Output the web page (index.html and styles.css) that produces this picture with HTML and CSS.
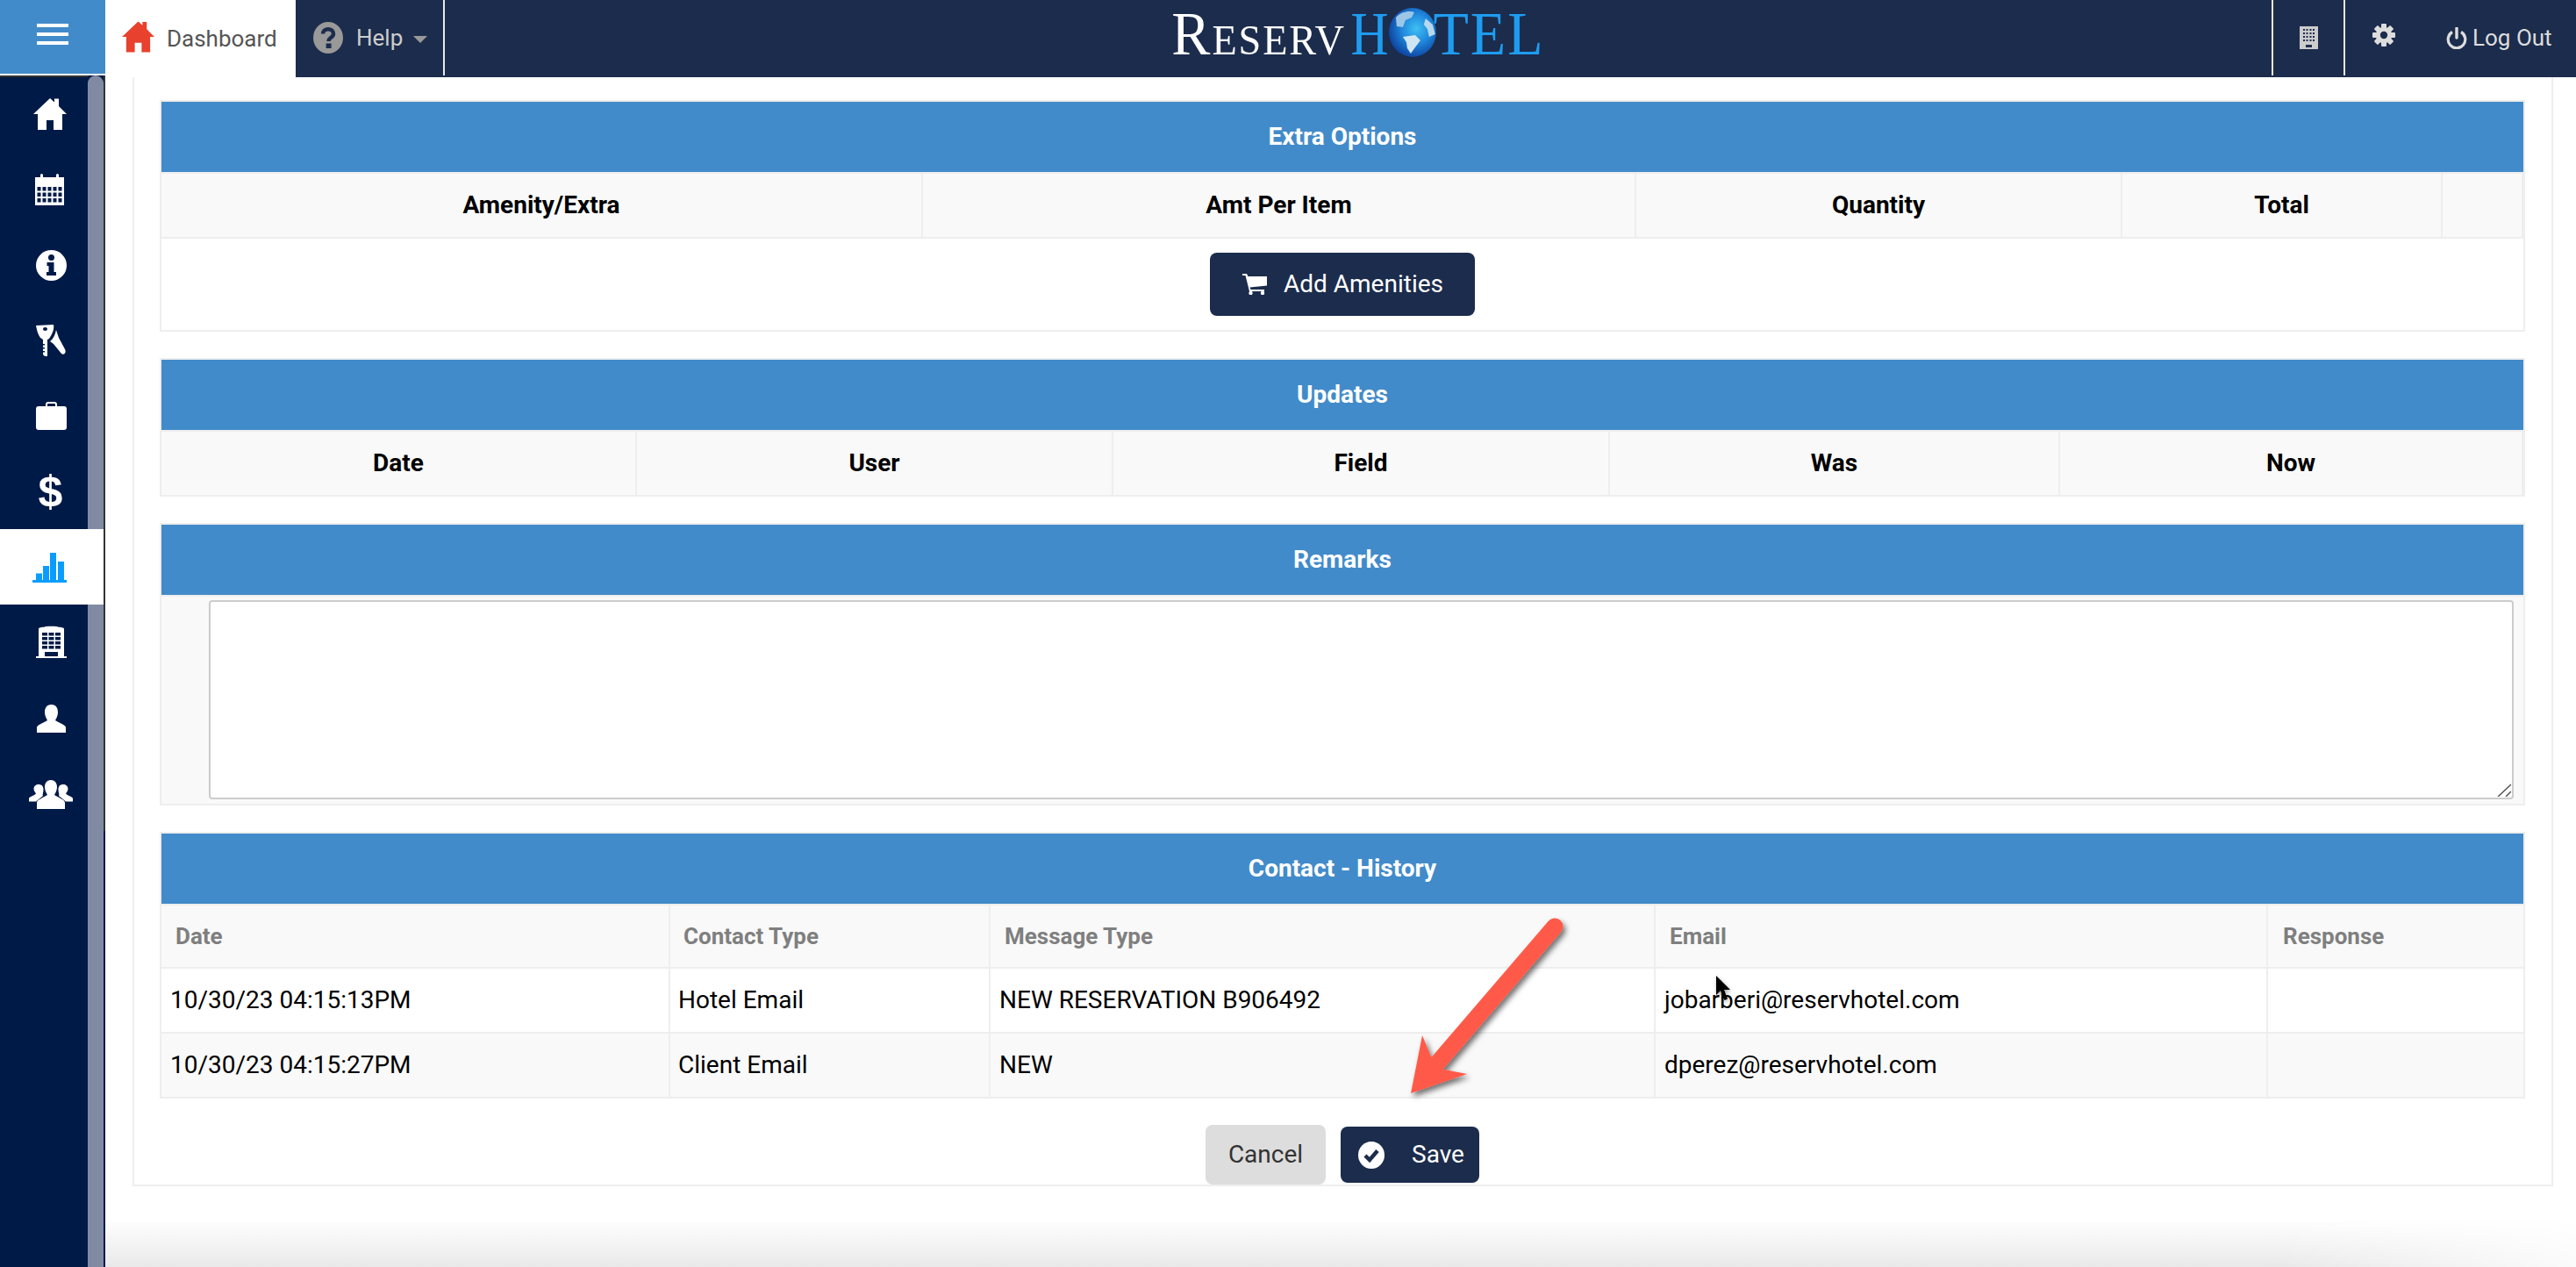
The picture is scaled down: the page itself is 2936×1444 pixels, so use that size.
FILE: index.html
```html
<!DOCTYPE html>
<html lang="en">
<head>
<meta charset="utf-8">
<title>ReservHotel</title>
<link rel="stylesheet" href="styles.css">
</head>
<body>
<div class="app">
  <header class="topbar">
    <div class="burger"><span></span><span></span><span></span></div>
    <a class="tab tab-active">
      <svg class="tab-home" viewBox="0 0 38 36"><path d="M19 0L24 4.5V.5H29V9L38 18H33V36H23V25H15V36H5V18H0Z"/></svg>
      Dashboard
    </a>
    <a class="tab tab-help">
      <svg class="help-ico" viewBox="0 0 34 36"><ellipse cx="17" cy="18" rx="17" ry="18" fill="#999"/><path d="M11 13.5C11 6.5 23 6.5 23 13.5C23 18 17.5 17.5 17.5 22" fill="none" stroke="#1c2c4c" stroke-width="4.5"/><rect x="14.6" y="24.5" width="6" height="5.5" fill="#1c2c4c"/></svg>
      Help
      <i class="caret"></i>
    </a>
    <i class="sep"></i>
    <div class="logo-wrap">
      <div class="logo">
        <span class="logo-w">Reserv</span><span class="logo-b logo-h">H</span><svg class="globe" viewBox="0 0 54 56" preserveAspectRatio="none">
          <defs><radialGradient id="gl" cx="58%" cy="42%" r="62%"><stop offset="0" stop-color="#3fc0f2"/><stop offset=".5" stop-color="#1f86dc"/><stop offset="1" stop-color="#0d3f9a"/></radialGradient></defs>
          <ellipse cx="27" cy="28" rx="27" ry="28" fill="url(#gl)"/>
          <path d="M8 11C14 4 24 3 29 5L26 11L19 14L16 22L9 21Z" fill="#9cc6e6"/>
          <path d="M16 33L30 31L36 37L30 45L25 52L21 46L20 39Z" fill="#cfe6f2"/>
          <path d="M42 12L50 19L53 30L46 33L44 24L40 19Z" fill="#b6d8ee"/>
        </svg><span class="logo-b logo-tel">TEL</span>
      </div>
    </div>
    <i class="sep"></i>
    <a class="tool tool-bld">
      <svg class="bld-small" viewBox="0 0 21 26"><path fill-rule="evenodd" d="M0 0H21V26H0ZM4 3V5H6V3ZM7.500 3V5H9.500V3ZM11.500 3V5H13.500V3ZM15 3V5H17V3ZM4 7V9H6V7ZM7.500 7V9H9.500V7ZM11.500 7V9H13.500V7ZM15 7V9H17V7ZM4 11V13H6V11ZM7.500 11V13H9.500V11ZM11.500 11V13H13.500V11ZM15 11V13H17V11ZM4 15V17H6V15ZM7.500 15V17H9.500V15ZM11.500 15V17H13.500V15ZM15 15V17H17V15ZM7 21V24H14V21Z"/></svg>
    </a>
    <i class="sep"></i>
    <a class="tool tool-gear">
      <svg class="gear" viewBox="0 0 26 26"><g fill="#ddd"><rect x="10" y="0" width="6" height="26" rx="1"/><rect x="10" y="0" width="6" height="26" rx="1" transform="rotate(45 13 13)"/><rect x="10" y="0" width="6" height="26" rx="1" transform="rotate(90 13 13)"/><rect x="10" y="0" width="6" height="26" rx="1" transform="rotate(135 13 13)"/></g><circle cx="13" cy="13" r="7" fill="none" stroke="#ddd" stroke-width="4.5"/><circle cx="13" cy="13" r="4.2" fill="#1c2c4c"/></svg>
    </a>
    <a class="logout">
      <svg class="power" viewBox="0 0 24 25"><path d="M7 5.5A9.8 9.8 0 1 0 17 5.5" fill="none" stroke="#ddd" stroke-width="3.2"/><path d="M12 1V12" stroke="#ddd" stroke-width="3.4" stroke-linecap="round"/></svg>
      Log Out
    </a>
  </header>

  <div class="body-row">
    <aside class="sidebar">
      <i class="thumb"></i>
      <nav class="side-nav">
        <a class="side-item"><svg class="ico-home" viewBox="0 0 38 36"><path d="M19 0L24 4.5V.5H29V9L38 18H33V36H23V25H15V36H5V18H0Z"/></svg></a>
        <a class="side-item"><svg class="ico-cal" viewBox="0 0 33 36"><path d="M0 4H6V1.5A1.5 1.5 0 0 1 9 1.5V4H24V1.5A1.5 1.5 0 0 1 27 1.5V4H33V36H0Z"/><g fill="#001a47"><rect x="2.500" y="15" width="4" height="4.500"/><rect x="8.500" y="15" width="4" height="4.500"/><rect x="14.500" y="15" width="4" height="4.500"/><rect x="20.500" y="15" width="4" height="4.500"/><rect x="26.500" y="15" width="4" height="4.500"/><rect x="2.500" y="21.500" width="4" height="4.500"/><rect x="8.500" y="21.500" width="4" height="4.500"/><rect x="14.500" y="21.500" width="4" height="4.500"/><rect x="20.500" y="21.500" width="4" height="4.500"/><rect x="26.500" y="21.500" width="4" height="4.500"/><rect x="2.500" y="28" width="4" height="4.500"/><rect x="8.500" y="28" width="4" height="4.500"/><rect x="14.500" y="28" width="4" height="4.500"/><rect x="20.500" y="28" width="4" height="4.500"/><rect x="26.500" y="28" width="4" height="4.500"/></g></svg></a>
        <a class="side-item"><svg class="ico-info" viewBox="0 0 35 35"><circle cx="17.500" cy="17.500" r="17.500"/><g fill="#001a47"><circle cx="17.500" cy="8.500" r="3.500"/><path d="M12.500 14H20.500V25H23V29H12V25H14.500V18H12.500Z"/></g></svg></a>
        <a class="side-item"><svg class="ico-keys" viewBox="0 0 34 36"><path fill-rule="evenodd" d="M0 1L20 0C21 5 19 10 15 16L13 17V36H10L8 34V17L5 15C2 11 1 6 0 1ZM8 5A2.500 2 0 0 0 13 5A2.500 2 0 0 0 8 5Z"/><path d="M23 6L26 15L33 28C35 32 32 35 29 33L20 22L16 19C20 16 22 11 23 6Z"/><path d="M10 22H8V23.500H10ZM10 26H8V27.500H10ZM10 30H8V31.500H10Z" fill="#001a47"/></svg></a>
        <a class="side-item"><svg class="ico-case" viewBox="0 0 35 32"><path d="M3 5H11V3C11 1 12 0 14 0H21C23 0 24 1 24 3V5H32C34 5 35 6 35 8V29C35 31 34 32 32 32H3C1 32 0 31 0 29V8C0 6 1 5 3 5ZM13 5H22V3C22 2.500 21.500 2 21 2H14C13.500 2 13 2.500 13 3Z"/></svg></a>
        <a class="side-item side-dollar">$</a>
        <a class="side-item side-active"><svg class="ico-chart" viewBox="0 0 39 34"><path d="M0 31H39V34H0ZM4 23.500H11V31H4ZM12 15H19V31H12ZM20 0H27V31H20ZM29 10H36V31H29Z"/></svg></a>
        <a class="side-item"><svg class="ico-bld" viewBox="0 0 35 37"><path fill-rule="evenodd" d="M3 4C3 2 6 2 10 1.500C10 .5 25 .5 25 1.500C29 2 32 2 32 4V35H35V37H0V35H3ZM7 8V11.500H13V8ZM14.500 8V11.500H20.500V8ZM22 8V11.500H28V8ZM7 13V16.500H13V13ZM14.500 13V16.500H20.500V13ZM22 13V16.500H28V13ZM7 18V21.500H13V18ZM14.500 18V21.500H20.500V18ZM22 18V21.500H28V18ZM7 23V26.500H13V23ZM14.500 23V26.500H20.500V23ZM22 23V26.500H28V23ZM10 30V35H25V30Z"/></svg></a>
        <a class="side-item"><svg class="ico-user" viewBox="0 0 33 32"><path d="M16.500 0C22 0 24 4 24 9C24 13 22 16 21 18C25 21 33 23 33 26V32H0V26C0 23 8 21 12 18C11 16 9 13 9 9C9 4 11 0 16.500 0Z"/></svg></a>
        <a class="side-item"><svg class="ico-group" viewBox="0 0 50 33"><path d="M25 0C30 0 32 4 32 8C32 12 30 15 29 17C33 20 41 22 41 26V33H9V26C9 22 17 20 21 17C20 15 18 12 18 8C18 4 20 0 25 0Z"/><path d="M11 5C14.500 5 16.500 7 16.500 11C16.500 14 15 17 16 18L8 24.500H0V21C0 19 6 18 8 15.500C7 14 5.500 12 5.500 10C5.500 7 8 5 11 5Z"/><path d="M39 5C35.500 5 33.500 7 33.500 11C33.500 14 35 17 34 18L42 24.500H50V21C50 19 44 18 42 15.500C43 14 44.500 12 44.500 10C44.500 7 42 5 39 5Z"/></svg></a>
      </nav>
    </aside>

    <main class="main">
      <div class="panel">
        <table class="sec">
          <colgroup><col class="w868"><col class="w813"><col class="w554"><col class="w365"><col></colgroup>
          <tr><th colspan="5" class="sec-title">Extra Options</th></tr>
          <tr class="head"><th>Amenity/Extra</th><th>Amt Per Item</th><th>Quantity</th><th>Total</th><th class="last"></th></tr>
          <tr><td colspan="5" class="add-cell"><button class="btn btn-add"><svg class="cart" viewBox="0 0 28 24"><path d="M0 0H5L6.500 3H28V13.500L8.500 15.500L9.500 18H25V20H8L3.500 2H0Z"/><circle cx="9.500" cy="22" r="2.200"/><circle cx="23" cy="22" r="2.200"/></svg>Add Amenities</button></td></tr>
        </table>

        <table class="sec">
          <colgroup><col class="w542"><col class="w543"><col class="w566"><col class="w513"><col></colgroup>
          <tr><th colspan="5" class="sec-title">Updates</th></tr>
          <tr class="head"><th>Date</th><th>User</th><th>Field</th><th>Was</th><th class="last">Now</th></tr>
        </table>

        <table class="sec">
          <tr><th class="sec-title">Remarks</th></tr>
          <tr><td class="remarks-cell"><div class="remarks-wrap"><textarea class="remarks"></textarea><svg class="grip" viewBox="0 0 16 16"><path d="M1 16L16 2M10 16L16 10" stroke="#555" stroke-width="1.5" fill="none"/></svg></div></td></tr>
        </table>

        <table class="sec sec-hist">
          <colgroup><col class="w580"><col class="w365"><col class="w758"><col class="w698"><col></colgroup>
          <tr><th colspan="5" class="sec-title">Contact - History</th></tr>
          <tr class="head-left"><th>Date</th><th>Contact Type</th><th>Message Type</th><th>Email</th><th class="last">Response</th></tr>
          <tr class="row"><td>10/30/23 04:15:13PM</td><td>Hotel Email</td><td>NEW RESERVATION B906492</td><td>jobarberi@reservhotel.com</td><td class="last"></td></tr>
          <tr class="row row-alt"><td>10/30/23 04:15:27PM</td><td>Client Email</td><td>NEW</td><td>dperez@reservhotel.com</td><td class="last"></td></tr>
        </table>

        <div class="actions">
          <button class="btn btn-cancel">Cancel</button>
          <button class="btn btn-save"><svg class="check" viewBox="0 0 30 31"><ellipse cx="15" cy="15.500" rx="15" ry="15.500" fill="#fff"/><path d="M8 16L13 21L22 10.500" fill="none" stroke="#1c2c4c" stroke-width="4.500"/></svg>Save</button>
        </div>
      </div>
      <div class="page-foot"></div>
    </main>
  </div>

  <svg class="annot" viewBox="0 0 2936 1444">
    <defs><filter id="sh" x="-20%" y="-20%" width="140%" height="140%"><feDropShadow dx="3" dy="4" stdDeviation="3" flood-color="#000" flood-opacity=".55"/></filter></defs>
    <g filter="url(#sh)" fill="#ff5a4a">
      <path d="M1772 1056L1638 1212" stroke="#ff5a4a" stroke-width="19" stroke-linecap="round"/>
      <path d="M1608 1246L1621 1180L1631 1204L1646 1219L1672 1224Z"/>
    </g>
  </svg>
  <svg class="cursor" viewBox="0 0 20 30"><path d="M1 0V22L6 17L10.500 28L14 26.500L10 16H17Z" fill="#000"/></svg>
</div>
</body>
</html>
```
FILE: styles.css
```css
* { box-sizing: border-box; }
html, body { margin: 0; padding: 0; height: 100%; background: #fff; }
body { font-family: Roboto, "Liberation Sans", sans-serif; font-size: 28px; color: #000; overflow: hidden; }
a { display: flex; }
.app { position: relative; display: flex; flex-direction: column; height: 1444px; overflow: hidden; }

/* top bar */
.topbar { display: flex; height: 88px; background: #1c2c4c; flex: none; }
.burger { width: 120px; height: 86px; background: #428bca; border-bottom: 2px solid #fff; display: flex; flex-direction: column; align-items: center; padding: 27px 0 0; gap: 6px; flex: none; }
.burger span { width: 36px; height: 4px; background: #fff; display: block; }
.tab { align-items: center; height: 86px; font-size: 26px; }
.tab-active { width: 217px; height: 88px; background: #fff; color: #555; padding: 0 0 0 19px; gap: 14px; }
.tab-home { width: 37px; height: 36px; fill: #e8412d; margin-top: -4px; }
.tab-help { width: 168px; color: #ccc; padding-left: 20px; }
.help-ico { width: 34px; height: 36px; margin-right: 15px; }
.caret { width: 0; height: 0; border: 8px solid transparent; border-top: 8px solid #999; border-bottom: 0; margin-left: 12px; margin-top: 4px; }
.sep { display: block; width: 2px; height: 86px; background: #e8e8e8; flex: none; }
.logo-wrap { flex: 1; display: flex; justify-content: center; align-items: flex-start; }
.logo { display: flex; align-items: flex-start; height: 88px; font-family: "Liberation Serif", serif; font-size: 70px; line-height: 78px; filter: blur(.6px); transform: scaleX(.945); }
.logo-w { color: #fff; font-variant: small-caps; letter-spacing: 2px; margin-right: 6px; }
.logo-b { color: #1e9cf0; }
.logo-h { display: inline-block; transform: scaleX(.9); transform-origin: left center; margin-right: -5px; }
.logo-tel { letter-spacing: 2px; margin-left: -3px; }
.globe { width: 57px; height: 56px; margin-top: 9px; flex: none; }
.tool { width: 80px; height: 86px; justify-content: center; align-items: center; }
.bld-small { width: 21px; height: 26px; fill: #ccc; }
.tool-gear { width: 88px; padding-bottom: 6px; }
.gear { width: 26px; height: 26px; }
.logout { align-items: center; height: 86px; width: 175px; padding-left: 27px; color: #ddd; font-size: 26px; gap: 6px; }
.power { width: 24px; height: 25px; }

/* sidebar */
.body-row { flex: 1; display: flex; min-height: 0; }
.sidebar { position: relative; width: 120px; flex: none; margin-top: -2px; background: #001a47; }
.thumb { position: absolute; top: 0; bottom: 0; left: 100px; width: 18px; background: #808ba3; border-radius: 9px 9px 0 0; }
.side-nav { position: relative; border-right: 2px solid #333; padding-top: 1px; }
.side-nav::before { content: ""; position: absolute; left: 0; top: 0; width: 100px; height: 2px; background: #333; }
.side-item { height: 86px; width: 100px; align-items: center; justify-content: center; padding-left: 16px; fill: #fff; color: #fff; }
.side-active { width: 118px; background: #fff; position: relative; padding-left: 0; padding-right: 5px; }
.side-dollar { font-family: "Liberation Sans", sans-serif; font-weight: 700; font-size: 50px; padding-left: 15px; }
.ico-home { width: 38px; height: 36px; margin-left: -2px; }
.ico-cal { width: 33px; height: 36px; margin-left: -4px; }
.ico-info { width: 35px; height: 35px; }
.ico-keys { width: 34px; height: 36px; }
.ico-case { width: 35px; height: 32px; }
.ico-chart { width: 39px; height: 34px; fill: #0a9cff; margin-top: 1px; }
.ico-bld { width: 35px; height: 37px; margin-top: -2px; }
.ico-user { width: 33px; height: 32px; margin-top: 2px; }
.ico-group { width: 50px; height: 33px; margin-top: 2px; }

/* main */
.main { flex: 1; min-width: 0; display: flex; flex-direction: column; padding-left: 31px; }
.panel { width: 2759px; border: 2px solid #eee; border-top: 0; padding: 26px 30px 0 29px; flex: none; }
.sec { width: 2696px; table-layout: fixed; border-collapse: separate; border-spacing: 0; border: 2px solid #eee; border-bottom: 0; margin-bottom: 30px; }
.sec th, .sec td { padding: 0; border-bottom: 2px solid #eee; }
.sec .sec-title { height: 82px; padding-bottom: 2px; background: #428bca; color: #fff; font-weight: 700; font-size: 28px; text-align: center; }
.sec .head th { height: 74px; padding-bottom: 2px; background: #f9f9f9; border-right: 2px solid #eee; font-size: 28px; font-weight: 700; text-align: center; }
.sec .last { border-right: 0; }
.w868 { width: 868px; } .w813 { width: 813px; } .w554 { width: 554px; } .w365 { width: 365px; }
.w542 { width: 542px; } .w543 { width: 543px; } .w566 { width: 566px; } .w513 { width: 513px; }
.w580 { width: 580px; } .w758 { width: 758px; } .w698 { width: 698px; }
.add-cell { height: 106px; text-align: center; }
.sec .remarks-cell { height: 238px; background: #f9f9f9; padding: 4px 11px 0 54px; vertical-align: top; }
.remarks-wrap { position: relative; width: 2627px; height: 227px; }
.remarks { display: block; width: 100%; height: 100%; border: 2px solid #ccc; border-radius: 4px; background: #fff; padding: 0; margin: 0; resize: none; }
.grip { position: absolute; right: 3px; bottom: 3px; width: 16px; height: 16px; }
.sec .head-left th { height: 72px; background: #f9f9f9; border-right: 2px solid #eee; color: #7f7f7f; font-size: 26px; font-weight: 700; text-align: left; padding-left: 16px; }
.sec .head-left th:nth-child(2) { padding-left: 15px; }
.sec .head-left th:last-child { padding-left: 17px; border-right: 0; }
.sec .row td { height: 74px; border-right: 2px solid #eee; padding: 0 0 1px 10px; font-size: 28px; }
.sec .row td:nth-child(2) { padding-left: 9px; }
.sec .row td:last-child { border-right: 0; }
.sec .row-alt td { background: #f9f9f9; }

/* buttons */
.btn { font-family: Roboto, "Liberation Sans", sans-serif; font-size: 28px; border: 0; margin: 0; display: inline-flex; align-items: center; }
.btn-add { width: 302px; height: 72px; background: #1c2c4c; color: #fff; border-radius: 8px; padding: 0 0 2px 37px; gap: 19px; vertical-align: middle; }
.cart { width: 28px; height: 24px; fill: #fff; margin-top: 2px; }
.actions { display: flex; justify-content: center; align-items: center; gap: 17px; height: 68px; }
.btn-cancel { width: 137px; height: 68px; background: #ddd; color: #333; border-radius: 8px; justify-content: center; padding: 0 0 2px; }
.btn-save { width: 158px; height: 64px; background: #1c2c4c; color: #fff; border-radius: 8px; padding: 0 0 2px 20px; gap: 31px; }
.check { width: 30px; height: 31px; margin-top: 2px; }
.page-foot { flex: 1; background: linear-gradient(to bottom, #fff 0, #fff 40%, #e9e9e9 100%); -webkit-mask-image: linear-gradient(to right, #000 88%, rgba(0,0,0,.2) 100%); mask-image: linear-gradient(to right, #000 88%, rgba(0,0,0,.2) 100%); margin-left: -31px; }

/* annotation overlays */
.annot { position: absolute; left: 0; top: 0; width: 2936px; height: 1444px; pointer-events: none; }
.cursor { position: absolute; left: 1955px; top: 1112px; width: 20px; height: 30px; filter: drop-shadow(1px 2px 2px rgba(0,0,0,.35)); }
```
